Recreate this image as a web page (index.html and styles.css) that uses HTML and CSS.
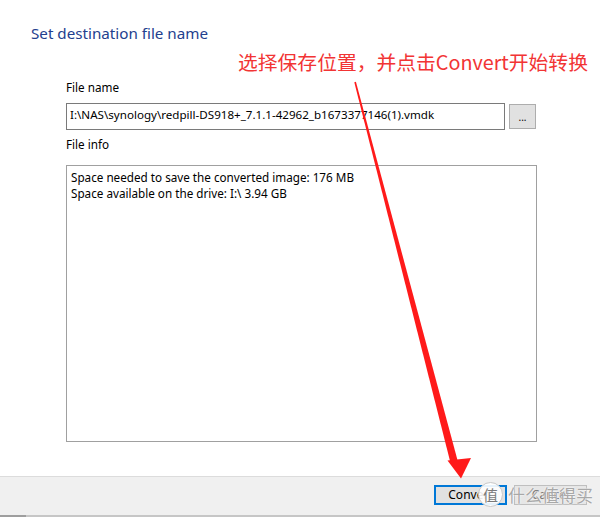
FILE: index.html
```html
<!DOCTYPE html>
<html lang="zh-CN">
<head>
  <meta charset="UTF-8" />
  <meta name="viewport" content="width=device-width, initial-scale=1" />
  <title>Set destination file name</title>
  <link rel="stylesheet" href="styles.css">
</head>
<body>
  <div class="window">
    <div class="title">Set destination file name</div>

    <div class="form">
      <label class="field-label" for="fileName">File name</label>
      <div class="file-row">
        <input type="text" id="fileName" class="file-input" value="I:\NAS\synology\redpill-DS918+_7.1.1-42962_b1673377146(1).vmdk" />
        <button class="browse-btn">...</button>
      </div>

      <div class="field-label">File info</div>
      <div class="info-box">Space needed to save the converted image: 176 MB
Space available on the drive: I:\ 3.94 GB</div>
    </div>

    <div class="footer">
      <button class="btn btn-primary">Convert</button>
      <button class="btn btn-cancel">Cancel</button>
    </div>
    <div class="bottom-strip"><span class="strip-thumb"></span></div>

    <!-- 标注 -->
    <div class="annotation">选择保存位置，并点击Convert开始转换</div>
    <svg class="arrow" width="600" height="517" viewBox="0 0 600 517">
      <polygon points="354.3,82.2 355.9,81.8 457.6,460.6 450.4,462.6" fill="#ff1a1a" />
      <polygon points="447.5,460.5 471,458 461,478.5" fill="#ff1a1a" />
    </svg>

    <div class="watermark">
      <span class="wm-badge">值</span>
      <span class="wm-text">什么值得买</span>
    </div>
  </div>
</body>
</html>
```

FILE: styles.css
```css
body {
  margin: 0;
  background: #fff;
  font-family: 'Segoe UI', 'Noto Sans', 'Noto Sans CJK SC', sans-serif;
  color: #000;
}
.window {
  position: relative;
  width: 600px;
  height: 517px;
  display: flex;
  flex-direction: column;
  overflow: hidden;
}
.title {
  padding: 22px 0 0 31px;
  font-size: 15.2px;
  line-height: 22px;
  color: #23408e;
}
.form {
  padding-left: 66px;
  width: 471px;
  margin-top: 36px;
}
.field-label {
  display: block;
  font-size: 11.7px;
  line-height: 15px;
  color: #000;
}
.file-row {
  display: flex;
  align-items: center;
  gap: 4px;
  margin-top: 8px;
  margin-bottom: 7px;
}
.file-input {
  width: 439px;
  height: 27px;
  box-sizing: border-box;
  border: 1px solid #7a7a7a;
  padding: 0 3px 4px;
  font-family: inherit;
  font-size: 11.6px;
  color: #000;
  background: #fff;
  outline: none;
}
.browse-btn {
  width: 27px;
  height: 25px;
  box-sizing: border-box;
  border: 1px solid #adadad;
  background: #e1e1e1;
  font-family: inherit;
  font-size: 10px;
  padding: 0;
  color: #000;
}
.info-box {
  margin-top: 13px;
  height: 277px;
  box-sizing: border-box;
  border: 1px solid #a0a0a0;
  padding: 3px 4px;
  font-size: 11.7px;
  line-height: 16px;
  white-space: pre-wrap;
}
.footer {
  margin-top: auto;
  height: 39px;
  box-sizing: border-box;
  border-top: 1px solid #dcdcdc;
  background: #f0f0f0;
  display: flex;
  justify-content: flex-end;
  align-items: flex-start;
  gap: 7px;
  padding: 8px 13px 0 0;
}
.btn {
  width: 73px;
  height: 20px;
  box-sizing: border-box;
  font-family: inherit;
  font-size: 12px;
  line-height: 16px;
  padding: 0;
  background: #e1e1e1;
  border: 1px solid #adadad;
  color: #000;
}
.btn-primary {
  border: 2px solid #0078d7;
}
.btn-cancel {
  background: #e6e6e6;
  border-color: #bfbfbf;
  color: #6d6d6d;
}
.bottom-strip {
  height: 2px;
  background: #c6c6c6;
}
.strip-thumb {
  display: block;
  width: 26px;
  height: 2px;
  background: #9e9e9e;
}
.annotation {
  position: absolute;
  left: 238px;
  top: 48px;
  font-family: 'Noto Sans CJK SC', sans-serif;
  font-size: 19.8px;
  line-height: 28px;
  color: #f23434;
  white-space: nowrap;
}
.arrow {
  position: absolute;
  left: 0;
  top: 0;
  pointer-events: none;
}
.watermark {
  position: absolute;
  left: 478px;
  top: 482px;
  display: flex;
  align-items: center;
  gap: 5px;
  pointer-events: none;
}
.wm-badge {
  width: 25px;
  height: 25px;
  border-radius: 50%;
  background: rgba(255, 255, 255, 0.9);
  border: 1px solid #c8c8c8;
  box-sizing: border-box;
  font-family: 'Noto Sans CJK SC', sans-serif;
  font-size: 15px;
  line-height: 23px;
  text-align: center;
  color: #7a7a7a;
}
.wm-text {
  font-family: 'Noto Sans CJK SC', sans-serif;
  font-size: 17px;
  line-height: 24px;
  color: #a8a8a8;
  text-shadow: 0 0 2px #fff, 0 0 1px #fff;
}
```
